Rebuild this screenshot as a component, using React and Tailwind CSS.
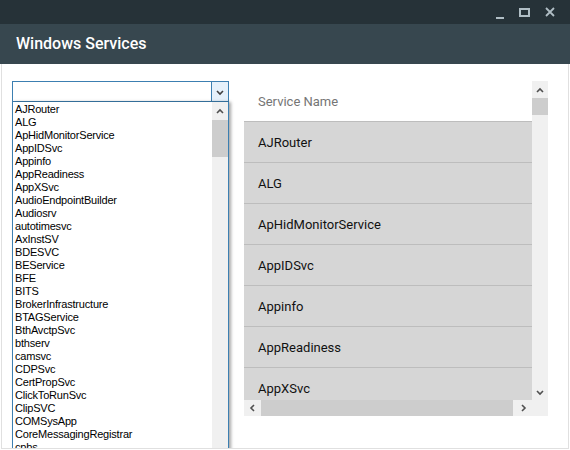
import { useState } from 'react';

const services = [
  'AJRouter', 'ALG', 'ApHidMonitorService', 'AppIDSvc', 'Appinfo', 'AppReadiness', 'AppXSvc',
  'AudioEndpointBuilder', 'Audiosrv', 'autotimesvc', 'AxInstSV', 'BDESVC', 'BEService', 'BFE',
  'BITS', 'BrokerInfrastructure', 'BTAGService', 'BthAvctpSvc', 'bthserv', 'camsvc', 'CDPSvc',
  'CertPropSvc', 'ClickToRunSvc', 'ClipSVC', 'COMSysApp', 'CoreMessagingRegistrar', 'cpbs',
];

const gridRows = ['AJRouter', 'ALG', 'ApHidMonitorService', 'AppIDSvc', 'Appinfo', 'AppReadiness', 'AppXSvc'];

function Arrow({ dir, color = '#606060', size = 8 }) {
  const pts = {
    up: '1,6 4,3 7,6',
    down: '1,3 4,6 7,3',
    left: '5,1 2,4 5,7',
    right: '3,1 6,4 3,7',
  }[dir];
  return (
    <svg width={size} height={size} viewBox="0 0 8 8">
      <polyline points={pts} fill="none" stroke={color} strokeWidth="1.6" />
    </svg>
  );
}

export default function App() {
  const [selected] = useState('');

  return (
    <div className="w-[570px] h-[450px] overflow-hidden bg-white flex flex-col" style={{ fontFamily: 'Roboto, sans-serif' }}>
      {/* title bar */}
      <div className="h-6 shrink-0 bg-[#263238] flex items-center justify-end gap-[15px] pr-[15px]">
        <div className="w-2 h-[2px] bg-[#b0bec5] mt-[11px]" />
        <div className="w-[11px] h-[9px] border-2 border-[#b0bec5]" />
        <svg width="10" height="10" viewBox="0 0 10 10">
          <path d="M1 1 L9 9 M9 1 L1 9" stroke="#b0bec5" strokeWidth="1.8" />
        </svg>
      </div>

      {/* header */}
      <div className="h-10 shrink-0 bg-[#37474f] flex items-center pl-4 text-white text-[16px] font-medium">
        Windows Services
      </div>

      {/* content */}
      <div className="flex-1 flex items-start pt-[17px] pl-[10px] border-x border-b border-[#e0e0e0] mx-[1px] mb-[1px] overflow-hidden">
        {/* combobox + dropdown */}
        <div className="w-[217px] flex flex-col" style={{ fontFamily: '"Liberation Sans", Arial, sans-serif' }}>
          <div className="h-[21px] border border-[#3c7fb1] flex bg-white">
            <div className="flex-1 text-[11px]">{selected}</div>
            <div className="w-[17px] bg-[#e5f1fb] border-l border-[#3c7fb1] flex items-center justify-center">
              <Arrow dir="down" color="#404040" />
            </div>
          </div>
          <div className="h-[360px] flex border-x border-[#3c7fb1] bg-white shadow-[2px_0_3px_rgba(0,0,0,0.35)]">
            <div className="flex-1 pt-[1px] overflow-hidden">
              {services.map(s => (
                <div key={s} className="h-[13px] leading-[13px] pl-[2px] text-[11px] tracking-[-0.2px] text-black whitespace-nowrap">
                  {s}
                </div>
              ))}
            </div>
            <div className="w-4 bg-[#f0f0f0] flex flex-col">
              <div className="h-[18px] flex items-center justify-center">
                <Arrow dir="up" color="#505050" />
              </div>
              <div className="h-[37px] bg-[#cdcdcd]" />
            </div>
          </div>
        </div>

        {/* grid */}
        <div className="ml-[15px] w-[304px] h-[335px] flex">
          <div className="w-[288px] flex flex-col">
            <div className="h-[319px] overflow-hidden">
              <div className="h-[41px] border-b border-[#bdbdbd] flex items-center pt-[2px] pl-[14px] text-[13px] text-[#757575]">
                Service Name
              </div>
              {gridRows.map(r => (
                <div key={r} className="h-[41px] border-b border-[#bdbdbd] bg-[#d6d6d6] flex items-center pt-[2px] pl-[14px] text-[13px] text-[#111111]">
                  {r}
                </div>
              ))}
            </div>
            <div className="h-4 bg-[#f0f0f0] flex items-center">
              <div className="w-[17px] flex justify-center"><Arrow dir="left" color="#505050" /></div>
              <div className="w-[252px] h-4 bg-[#cdcdcd]" />
              <div className="flex-1 flex justify-center"><Arrow dir="right" color="#505050" /></div>
            </div>
          </div>
          <div className="w-4 bg-[#f0f0f0] flex flex-col">
            <div className="h-[17px] flex items-center justify-center"><Arrow dir="up" color="#505050" /></div>
            <div className="h-[17px] bg-[#cdcdcd]" />
            <div className="flex-1" />
            <div className="h-[17px] flex items-center justify-center"><Arrow dir="down" color="#505050" /></div>
            <div className="h-4" />
          </div>
        </div>
      </div>
    </div>
  );
}
